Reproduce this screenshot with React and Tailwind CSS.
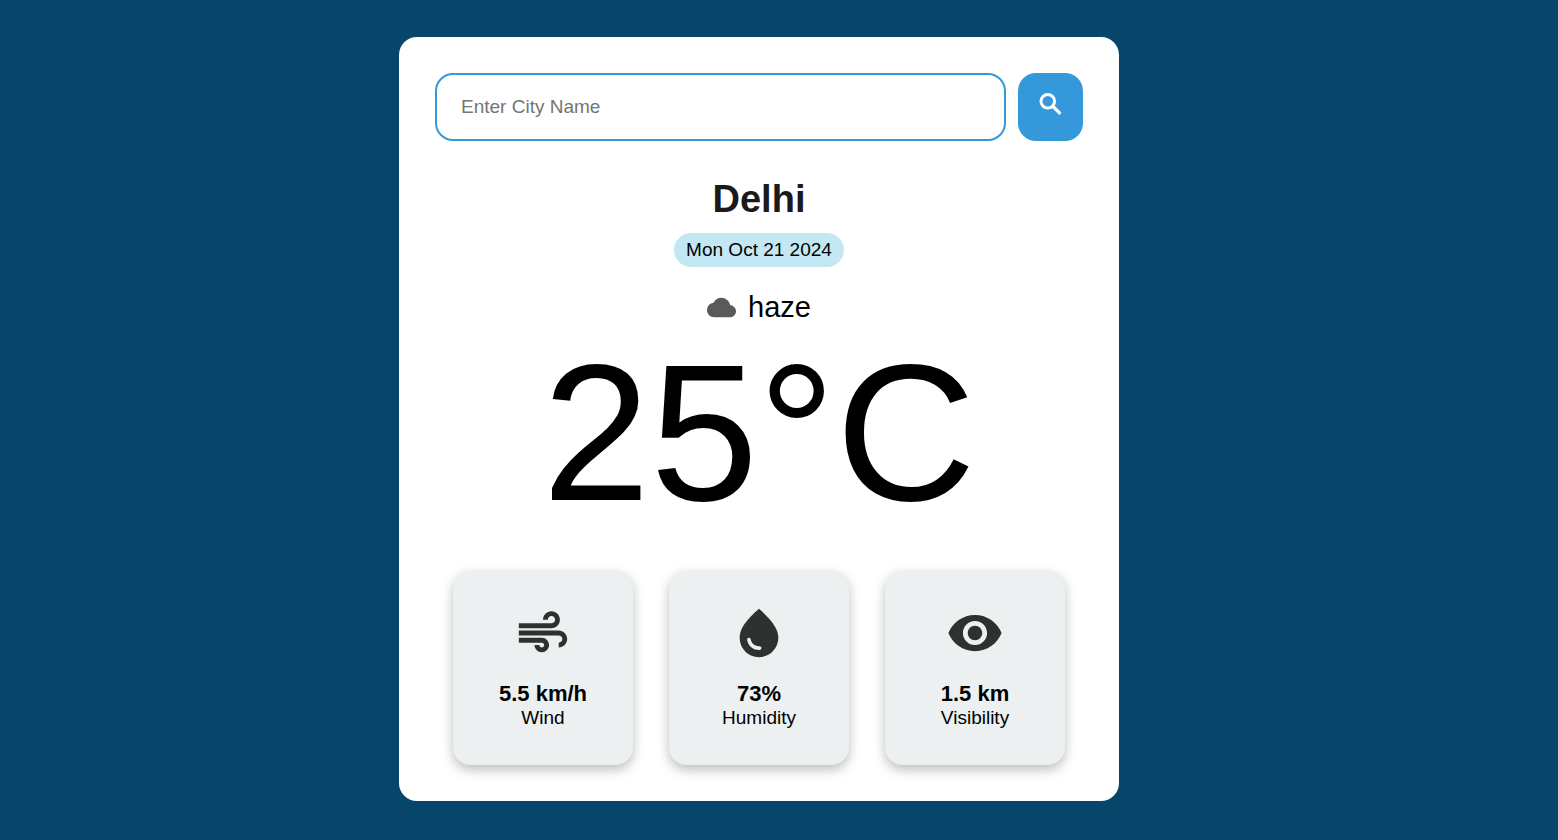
import { MdAir, MdCloud, MdRemoveRedEye, MdWaterDrop } from "react-icons/md";

const stats = [
  { label: "Wind", value: "5.5 km/h", Icon: MdAir },
  { label: "Humidity", value: "73%", Icon: MdWaterDrop },
  { label: "Visibility", value: "1.5 km", Icon: MdRemoveRedEye },
];

function SearchIcon() {
  return (
    <svg viewBox="0 0 30 30" className="size-[30px]" fill="none" stroke="currentColor" aria-hidden="true">
      <circle cx="11.8" cy="12.3" r="6.8" strokeWidth="3" />
      <path d="M16.2 16.7 L24.4 24.9" strokeWidth="3.3" />
    </svg>
  );
}

function SearchBar() {
  return (
    <form className="flex gap-3" onSubmit={(event) => event.preventDefault()}>
      <input
        type="text"
        aria-label="City name"
        placeholder="Enter City Name"
        className="h-17 min-w-0 flex-1 rounded-[18px] border-2 border-[#3498db] bg-white px-6 text-[19px] text-black outline-none placeholder:text-[#757575]"
      />
      <button
        type="submit"
        aria-label="Search"
        className="flex w-[65px] shrink-0 justify-center rounded-[18px] bg-[#3498db] pt-4 text-white"
      >
        <SearchIcon />
      </button>
    </form>
  );
}

function StatCard({ label, value, Icon }) {
  return (
    <li className="flex flex-col items-center rounded-[18px] bg-[#ecf0f1] pt-[34px] pb-[35px] shadow-[0_5px_12px_rgba(0,0,0,0.25)]">
      <Icon size={58} className="mb-5 text-[#2f3130]" />
      <p className="text-[22px] leading-6 font-bold">{value}</p>
      <p className="text-[19px] leading-6">{label}</p>
    </li>
  );
}

export default function App() {
  return (
    <div className="flex min-h-screen items-center justify-center bg-[#07456b] pr-10 pb-0.5 font-['Liberation_Sans',Arial,sans-serif] text-black">
      <main className="w-full max-w-[720px] rounded-[18px] bg-white p-9">
        <SearchBar />
        <section className="mt-9 flex flex-col items-center">
          <h1 className="text-[38px] leading-11 font-bold text-[#1a1a1a]">Delhi</h1>
          <p className="mt-3 rounded-full bg-[#c3e8f4] px-3 py-1.5 text-[19px] leading-[22px]">
            Mon Oct 21 2024
          </p>
          <p className="mt-6 flex items-center gap-3 text-[29px] leading-8">
            <MdCloud size={29} className="text-[#5a5a5a]" />
            haze
          </p>
          <p className="text-[194px] leading-[219px]">25°C</p>
        </section>
        <ul className="mx-[18px] mt-7 grid grid-cols-3 gap-9">
          {stats.map((stat) => (
            <StatCard key={stat.label} {...stat} />
          ))}
        </ul>
      </main>
    </div>
  );
}
